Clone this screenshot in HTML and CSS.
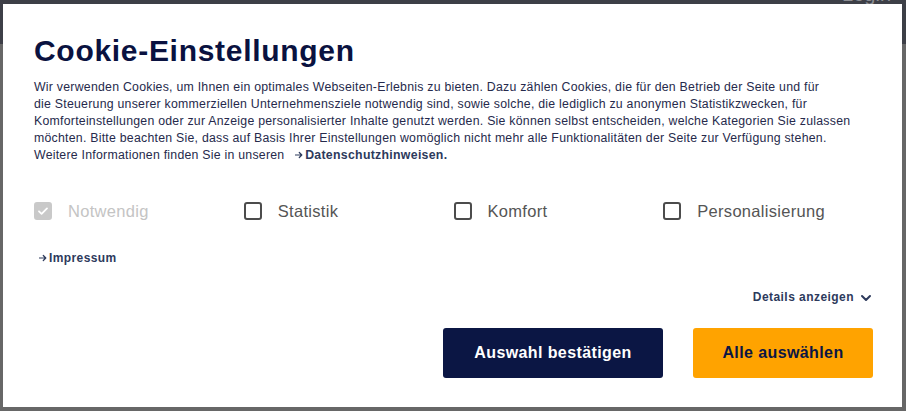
FILE: index.html
```html
<!DOCTYPE html>
<html lang="de">
<head>
<meta charset="utf-8">
<title>Cookie-Einstellungen</title>
<link rel="stylesheet" href="styles.css">
</head>
<body>
<header class="topbar">
  <span class="login">Login</span>
</header>
<main class="page"></main>

<div class="modal" role="dialog" aria-labelledby="cookie-title">
  <h1 class="title" id="cookie-title">Cookie-Einstellungen</h1>
  <p class="intro">Wir verwenden Cookies, um Ihnen ein optimales Webseiten-Erlebnis zu bieten. Dazu zählen Cookies, die für den Betrieb der Seite und für<br>die Steuerung unserer kommerziellen Unternehmensziele notwendig sind, sowie solche, die lediglich zu anonymen Statistikzwecken, für Komforteinstellungen oder zur Anzeige personalisierter Inhalte genutzt werden. Sie können selbst entscheiden, welche Kategorien Sie zulassen möchten. Bitte beachten Sie, dass auf Basis Ihrer Einstellungen womöglich nicht mehr alle Funktionalitäten der Seite zur Verfügung stehen.<br>Weitere Informationen finden Sie in unseren <a class="link" href="#"><svg class="arrow" viewBox="0 0 8 8" width="8" height="8"><path d="M0.5 4h6.3M4.3 1.5L6.8 4 4.3 6.5" fill="none" stroke="currentColor" stroke-width="1.2" stroke-linecap="round" stroke-linejoin="round"/></svg>Datenschutzhinweisen.</a></p>

  <div class="options">
    <label class="option disabled">
      <span class="box checked">
        <svg viewBox="0 0 18 18" width="18" height="18"><path d="M5 9.3l2.6 2.5L13 6.4" fill="none" stroke="#fff" stroke-width="1.8" stroke-linecap="round" stroke-linejoin="round"/></svg>
      </span>
      <span class="label">Notwendig</span>
    </label>
    <label class="option">
      <span class="box"></span>
      <span class="label">Statistik</span>
    </label>
    <label class="option">
      <span class="box"></span>
      <span class="label">Komfort</span>
    </label>
    <label class="option">
      <span class="box"></span>
      <span class="label">Personalisierung</span>
    </label>
  </div>

  <a class="link impressum" href="#"><svg class="arrow" viewBox="0 0 8 8" width="8" height="8"><path d="M0.5 4h6.3M4.3 1.5L6.8 4 4.3 6.5" fill="none" stroke="currentColor" stroke-width="1.2" stroke-linecap="round" stroke-linejoin="round"/></svg>Impressum</a>

  <div class="details-row">
    <a class="link details" href="#">Details anzeigen
      <svg class="chev" viewBox="0 0 14 14" width="14" height="14"><path d="M3 5l4 4 4-4" fill="none" stroke="#2d3a5c" stroke-width="2" stroke-linecap="round" stroke-linejoin="round"/></svg>
    </a>
  </div>

  <div class="actions">
    <button class="btn btn-primary" type="button">Auswahl bestätigen</button>
    <button class="btn btn-accent" type="button">Alle auswählen</button>
  </div>
</div>
</body>
</html>
```

FILE: styles.css
```css
html, body {
  margin: 0;
  padding: 0;
  height: 100%;
}

body {
  background: #676767;
  font-family: "Liberation Sans", Arial, sans-serif;
  overflow: hidden;
}

.topbar {
  height: 44px;
  background: #3d3f47;
  display: flex;
  justify-content: flex-end;
  align-items: flex-start;
  padding-right: 15px;
}

.login {
  margin-top: -17px;
  font-size: 20px;
  line-height: 22px;
  color: #8c8d92;
}

.modal {
  position: fixed;
  left: 3px;
  top: 4px;
  width: 899px;
  height: 403px;
  box-sizing: border-box;
  padding: 29px 29px 29px 31px;
  background: #fff;
  display: flex;
  flex-direction: column;
}

.title {
  margin: 0;
  font-size: 30px;
  line-height: 36px;
  font-weight: 700;
  letter-spacing: 0.7px;
  color: #0a1240;
}

.intro {
  margin: 10px 0 0;
  font-size: 12.3px;
  line-height: 17px;
  letter-spacing: 0.25px;
  color: #262a4c;
}

.link {
  color: #2d3a5c;
  font-weight: 700;
  text-decoration: none;
  letter-spacing: 0.3px;
}

.intro .link {
  margin-left: 7px;
}

.arrow {
  display: inline-block;
  vertical-align: 0;
  margin-right: 2px;
}

.options {
  display: flex;
  margin-top: 37px;
}

.option {
  width: 210px;
  display: flex;
  align-items: center;
  gap: 16px;
}

.box {
  width: 18px;
  height: 18px;
  box-sizing: border-box;
  border: 2px solid #4c4c4c;
  border-radius: 3px;
  display: flex;
  align-items: center;
  justify-content: center;
  flex: none;
}

.box.checked {
  background: #c9c9c9;
  border-color: #c9c9c9;
}

.box svg {
  flex: none;
}

.label {
  font-size: 16.5px;
  line-height: 20px;
  letter-spacing: 0.3px;
  color: #555;
}

.disabled .label {
  color: #c4c4c4;
}

.impressum {
  align-self: flex-start;
  margin-top: 29px;
  margin-left: 5px;
  font-size: 12px;
  line-height: 17px;
  letter-spacing: 0.4px;
}

.details-row {
  display: flex;
  justify-content: flex-end;
  margin-top: 22px;
}

.details {
  display: flex;
  align-items: center;
  gap: 5px;
  font-size: 12px;
  line-height: 17px;
  letter-spacing: 0.45px;
}

.actions {
  margin-top: auto;
  display: flex;
  justify-content: flex-end;
  gap: 30px;
}

.btn {
  height: 50px;
  border: none;
  border-radius: 3px;
  font-family: "Liberation Sans", Arial, sans-serif;
  font-size: 16px;
  font-weight: 700;
  letter-spacing: 0.4px;
  cursor: pointer;
}

.btn-primary {
  width: 220px;
  background: #0b1644;
  color: #fff;
}

.btn-accent {
  width: 180px;
  background: #ffa300;
  color: #0b1644;
}
```
